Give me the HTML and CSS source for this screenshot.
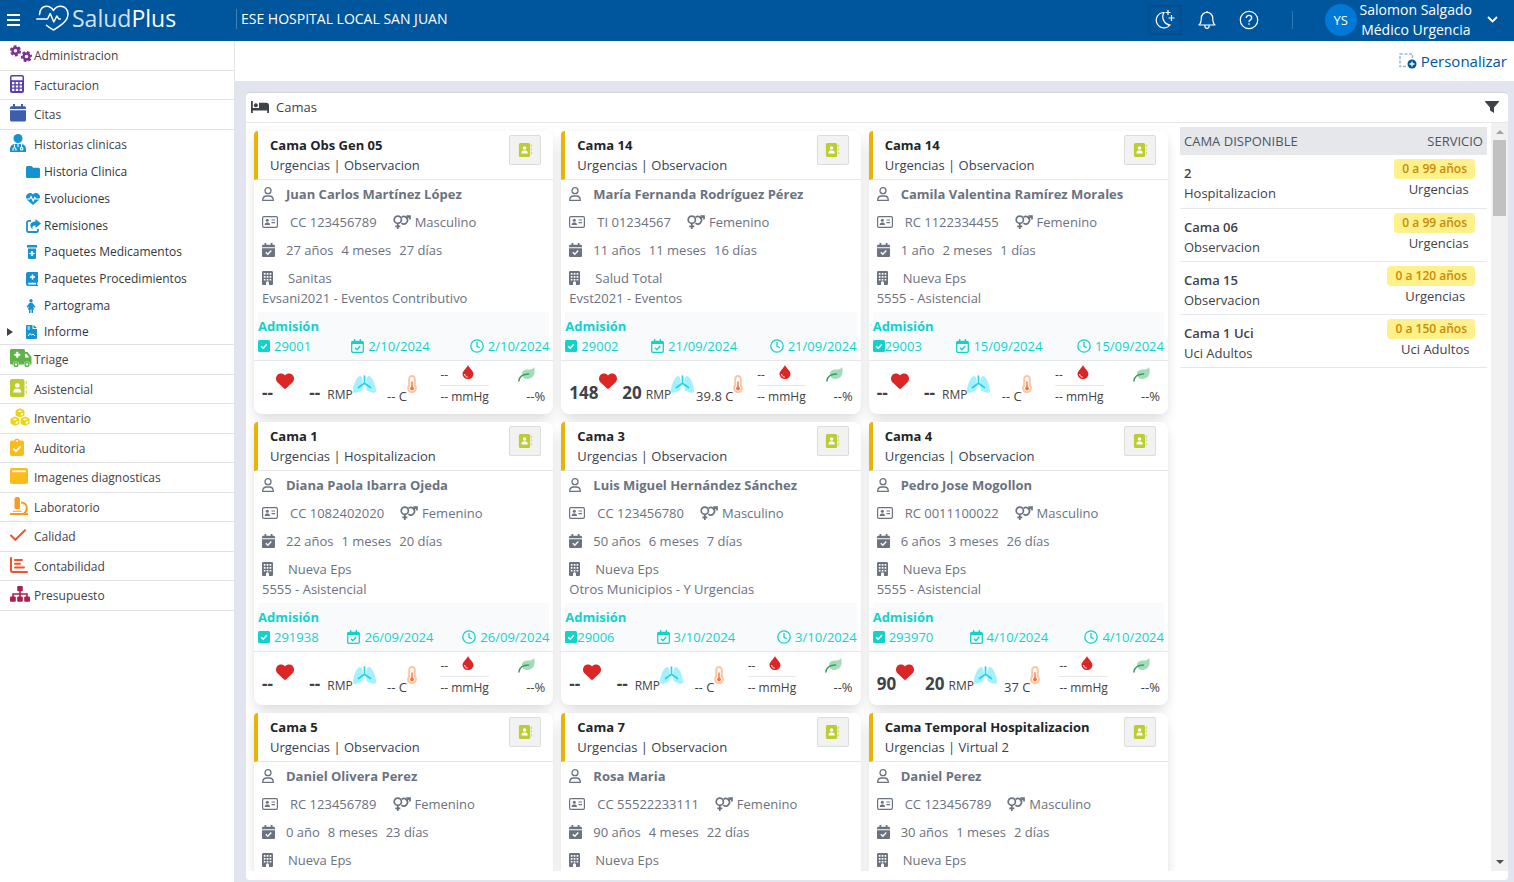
FILE: index.html
```html
<!DOCTYPE html>
<html lang="es">
<head>
<meta charset="utf-8">
<title>SaludPlus - Camas</title>
<link rel="stylesheet" href="styles.css">
</head>
<body>
<svg class="sprite" aria-hidden="true">
  <symbol id="i-gears" viewBox="0 0 22 17"><g fill="none" stroke="currentColor"><circle cx="5.5" cy="5.8" r="3" stroke-width="2.4"/><circle cx="5.5" cy="5.8" r="4.7" stroke-width="1.8" stroke-dasharray="2.8 2.12"/><circle cx="16.5" cy="11.5" r="3" stroke-width="2.4"/><circle cx="16.5" cy="11.5" r="4.7" stroke-width="1.8" stroke-dasharray="2.8 2.12" stroke-dashoffset="2.5"/></g></symbol>
  <symbol id="i-calc" viewBox="0 0 14 18"><path fill="currentColor" fill-rule="evenodd" d="M2 0h10a2 2 0 0 1 2 2v14a2 2 0 0 1-2 2H2a2 2 0 0 1-2-2V2a2 2 0 0 1 2-2zm.5 1.6c-.6 0-1 .4-1 1v2.600h11V2.600c0-.6-.4-1-1-1zM2 7v2.200h2.400V7zm3.800 0v2.200h2.400V7zm3.800 0v2.200H12V7zM2 10.400v2.200h2.400v-2.200zm3.800 0v2.200h2.400v-2.200zm3.800 0v2.200H12v-2.200zM2 13.800V16h2.400v-2.200zm3.800 0V16h2.400v-2.200zm3.800 0V16H12v-2.200z"/></symbol>
  <symbol id="i-cal" viewBox="0 0 16 18"><path fill="currentColor" d="M3 0h2v2.200h6V0h2v2.200h1.500A1.500 1.500 0 0 1 16 3.700V5H0V3.700a1.500 1.500 0 0 1 1.500-1.500H3zM0 6.300h16V16a1.500 1.500 0 0 1-1.500 1.500h-13A1.500 1.500 0 0 1 0 16z"/></symbol>
  <symbol id="i-doctor" viewBox="0 0 16 18"><circle cx="8" cy="4.500" r="4.500" fill="currentColor"/><path fill="currentColor" d="M0 18v-3c0-3 2-4.700 4.500-5h7c2.500.3 4.500 2 4.500 5v3z"/><path fill="none" stroke="#fff" stroke-width="1.100" d="M8 10v3M4.500 10.500V13M3 16.800v-1.500a1.500 1.500 0 0 1 3 0v1.500M11.500 10v3"/><circle cx="11.600" cy="14.700" r="1.300" fill="none" stroke="#fff" stroke-width="1.100"/></symbol>
  <symbol id="i-folder" viewBox="0 0 14 12"><path fill="currentColor" d="M1.500 0h4l1.800 1.700h5.200A1.500 1.500 0 0 1 14 3.200v7.300a1.500 1.500 0 0 1-1.500 1.500h-11A1.500 1.500 0 0 1 0 10.500v-9A1.500 1.500 0 0 1 1.500 0z"/></symbol>
  <symbol id="i-pulse" viewBox="0 0 14 12"><path fill="currentColor" d="M7 1.600C8.500-.3 11-.3 12.500 1c2 1.700 1.900 4 .3 5.900L7 12 1.200 6.900C-.4 5-.5 2.700 1.500 1 3-.3 5.500-.3 7 1.600z"/><path fill="none" stroke="#fff" stroke-width="1.200" d="M0 6h3.700l1.300-2.500L7.200 8l1.600-3.500.8 1.500H14"/></symbol>
  <symbol id="i-share" viewBox="0 0 15 14"><path fill="none" stroke="currentColor" stroke-width="1.800" d="M5 1.900H2.500A1.500 1.500 0 0 0 1 3.400v8A1.500 1.500 0 0 0 2.500 13h8a1.500 1.500 0 0 0 1.500-1.600V10"/><path fill="currentColor" d="M9.500 0 15 4.500 9.500 9V6.500C6.500 6.500 6 8 6.800 10.500 3 8 3.500 2.600 9.500 2.600z"/></symbol>
  <symbol id="i-bottle" viewBox="0 0 12 14"><path fill="currentColor" d="M1 0h10v2.500H1zM2 3.500h8V13a1 1 0 0 1-1 1H3a1 1 0 0 1-1-1z"/><path stroke="#fff" stroke-width="1.600" d="M6 6v5M3.500 8.500h5"/></symbol>
  <symbol id="i-book" viewBox="0 0 12 14"><path fill="currentColor" fill-rule="evenodd" d="M2 0h10v10.500h-.7V13h.7v1H2a2 2 0 0 1-2-2V2a2 2 0 0 1 2-2zm.6 10.800a1 1 0 0 0 0 1.800H10v-1.800z"/><path stroke="#fff" stroke-width="1.500" d="M6.500 2.500v5M4 5h5"/></symbol>
  <symbol id="i-woman" viewBox="0 0 10 14"><circle cx="5" cy="1.700" r="1.700" fill="currentColor"/><path fill="currentColor" d="M3.700 3.800h2.600l3.200 4-1.100.9L7 7.200l1.200 3.300H7V14H5.500v-3.400h-1V14H3v-3.500H1.800L3 7.200 1.600 8.700.5 7.800z"/></symbol>
  <symbol id="i-report" viewBox="0 0 11 14"><path fill="currentColor" d="M1 0h5.500v4H11v9a1 1 0 0 1-1 1H1a1 1 0 0 1-1-1V1a1 1 0 0 1 1-1zM7.500 0 11 3H7.500z"/><path fill="none" stroke="#fff" d="M1.500 2H4M1.500 4H4M2 11l2-2.500L5.500 10 7 9l2 2"/></symbol>
  <symbol id="i-ambulance" viewBox="0 0 22 18"><path fill="currentColor" fill-rule="evenodd" d="M1.500 0h12A1.500 1.500 0 0 1 15 1.500V3h2.500L21.500 8v7.500H20a3 3 0 0 0-6 0H9a3 3 0 0 0-6 0H1.500A1.500 1.500 0 0 1 0 14V1.500A1.500 1.500 0 0 1 1.500 0zM15 5v3.500h4.200L16.700 5z"/><circle cx="6" cy="15.400" r="1.900" fill="none" stroke="currentColor" stroke-width="1.400"/><circle cx="17" cy="15.400" r="1.900" fill="none" stroke="currentColor" stroke-width="1.400"/><path stroke="#fff" stroke-width="2" d="M7.300 2.800v6M4.300 5.800h6"/></symbol>
  <symbol id="i-contact" viewBox="0 0 17 18"><rect width="14.500" height="18" rx="2" fill="currentColor"/><path stroke="currentColor" stroke-width="1.400" stroke-dasharray="3 1.800" d="M16.300 2v14" opacity=".6"/><circle cx="7.300" cy="6.500" r="2.300" fill="#fff"/><path fill="#fff" d="M3.300 13.500c0-2.500 1-3.700 2.700-3.700h2.600c1.700 0 2.700 1.200 2.700 3.700z"/></symbol>
  <symbol id="i-cubes" viewBox="0 0 20 18"><path fill="currentColor" stroke="currentColor" stroke-linejoin="round" d="M10 .8 14 2.600v4.600L10 9 6 7.200V2.600zM5 9l4 1.800v4.600L5 17.300 1 15.400v-4.600zM15 9l4 1.800v4.600l-4 1.900-4-1.900v-4.600z"/><path fill="#fff" d="m10 2.200 2.300 1L10 4.200l-2.300-1zM10.800 5.800 13 4.900v1.900l-2.200 1zM5 10.400l2.300 1-2.300 1-2.300-1zM5.800 14l2.200-.9V15l-2.200 1zM15 10.400l2.300 1-2.300 1-2.300-1zM15.800 14l2.200-.9V15l-2.200 1z"/></symbol>
  <symbol id="i-clip" viewBox="0 0 14 18"><path fill="currentColor" d="M2 2.500h2.300a2.800 2.800 0 0 1 5.400 0H12a2 2 0 0 1 2 2V16a2 2 0 0 1-2 2H2a2 2 0 0 1-2-2V4.500a2 2 0 0 1 2-2z"/><circle cx="7" cy="3" r="1" fill="#fff"/><path fill="none" stroke="#fff" stroke-width="1.800" d="m3.300 10.700 2.700 2.600 4.700-5"/></symbol>
  <symbol id="i-window" viewBox="0 0 18 16"><rect width="18" height="16" rx="2" fill="currentColor"/><path stroke="#fff" stroke-width="1.800" d="M2.200 3.300h13.600"/></symbol>
  <symbol id="i-micro" viewBox="0 0 18 18"><path fill="currentColor" d="M4.500 2.500A1.200 1.200 0 0 1 5.500 1V0h3.500v1a1.200 1.200 0 0 1 1 1.500V11a1 1 0 0 1-1 1H5.500a1 1 0 0 1-1-1zM3 13.700h8.500v1H3zM0 16h18v2H0z"/><path fill="none" stroke="currentColor" stroke-width="2" d="M11 5.500c3.500 0 5.800 2.300 5.800 5.500 0 2.800-1.500 4.700-3.300 6"/></symbol>
  <symbol id="i-check" viewBox="0 0 16 12"><path fill="none" stroke="currentColor" stroke-width="2" stroke-linecap="round" d="m1 6.500 4.300 4.300L15 1.200"/></symbol>
  <symbol id="i-chart" viewBox="0 0 18 16"><path fill="none" stroke="currentColor" stroke-width="2" stroke-linecap="round" d="M1 1v12.500A1.500 1.500 0 0 0 2.500 15H17M5 3h7M5 6.800h5M5 10.600h9"/></symbol>
  <symbol id="i-tree" viewBox="0 0 20 16"><path fill="none" stroke="currentColor" stroke-width="1.600" d="M10 4v7M3 11V8h14v3"/><g fill="currentColor"><rect x="7.200" width="5.600" height="5.300" rx="1"/><rect y="10.500" width="5.800" height="5.300" rx="1"/><rect x="7.200" y="10.500" width="5.600" height="5.300" rx="1"/><rect x="14.200" y="10.500" width="5.800" height="5.300" rx="1"/></g></symbol>
  <symbol id="i-bed" viewBox="0 0 18 12"><path fill="currentColor" d="M0 0h1.800v7H8V1.800h7A3 3 0 0 1 18 5v7h-1.800V9.500H1.800V12H0z"/><circle cx="4.900" cy="4.300" r="2" fill="currentColor"/></symbol>
  <symbol id="i-filter" viewBox="0 0 14 12"><path fill="currentColor" d="M.5 0h13c.5 0 .7.600.3 1L9 6.500V12L5 9.500v-3L.2 1C-.1.600 0 0 .5 0z"/></symbol>
  <symbol id="i-user" viewBox="0 0 12 14"><g fill="none" stroke="currentColor" stroke-width="1.300"><circle cx="6" cy="3.700" r="3"/><path d="M.7 13.300c0-2.800 1.800-4.300 4-4.300h2.600c2.200 0 4 1.500 4 4.300z"/></g></symbol>
  <symbol id="i-id" viewBox="0 0 16 12"><rect x=".6" y=".6" width="14.800" height="10.800" rx="1.300" fill="none" stroke="currentColor" stroke-width="1.200"/><circle cx="5.300" cy="4.200" r="1.500" fill="currentColor"/><path fill="currentColor" d="M2.700 9c0-1.800.8-2.600 2-2.600H6c1.200 0 2 .8 2 2.600zM9.500 3.400H13v1.200H9.500zM9.500 6H13v1.200H9.500z"/></symbol>
  <symbol id="i-sex" viewBox="0 0 18 14"><g fill="none" stroke="currentColor" stroke-width="1.700"><circle cx="4.800" cy="4.700" r="3.600"/><path d="M4.800 8.300V14M2.300 11.400h5M8.600 2.200a3.700 3.700 0 1 1-.2 5.900M13.300 4 16.500 1M13.300 1H17v3.500"/></g></symbol>
  <symbol id="i-calcheck" viewBox="0 0 13 14"><path fill="currentColor" d="M2.500 0h1.800v1.700h4.400V0h1.800v1.700h1.200c.7 0 1.300.6 1.300 1.300v1.300H0V3c0-.7.600-1.300 1.300-1.300h1.200zM0 5.200h13v7.500c0 .7-.6 1.300-1.300 1.300H1.300C.6 14 0 13.400 0 12.700z"/><path fill="none" stroke="#fff" stroke-width="1.400" d="m3.800 9.300 2 2L9.300 7.600"/></symbol>
  <symbol id="i-building" viewBox="0 0 11 14"><path fill="currentColor" fill-rule="evenodd" d="M1.300 0h8.400C10.400 0 11 .6 11 1.300v11.400c0 .7-.6 1.300-1.300 1.300H7v-2.300a1.500 1.500 0 0 0-3 0V14H1.300C.6 14 0 13.400 0 12.700V1.300C0 .6.600 0 1.300 0zM1.800 2v1.800h1.700V2zm2.900 0v1.800h1.700V2zm2.900 0v1.800h1.700V2zM1.800 5v1.800h1.700V5zm2.900 0v1.800h1.700V5zm2.900 0v1.800h1.700V5zM1.800 8v1.500h1.700V8zm2.900 0v1.500h1.700V8zm2.900 0v1.500h1.700V8z"/></symbol>
  <symbol id="i-tick" viewBox="0 0 12 12"><rect width="12" height="12" rx="1.500" fill="currentColor"/><path fill="none" stroke="#fff" stroke-width="1.500" d="m3.200 6.200 2 2 3.600-4"/></symbol>
  <symbol id="i-calline" viewBox="0 0 13 14"><path fill="none" stroke="currentColor" stroke-width="1.300" d="M2 2.300h9c.8 0 1.300.5 1.300 1.300V12c0 .8-.5 1.300-1.300 1.300H2c-.8 0-1.300-.5-1.300-1.300V3.600c0-.8.500-1.300 1.300-1.300zM3.700 0v3M9.300 0v3M4 8.800l1.900 1.900L9.200 7"/><path fill="currentColor" d="M1 2.500h11V5H1z"/></symbol>
  <symbol id="i-clock" viewBox="0 0 14 14"><g fill="none" stroke="currentColor" stroke-width="1.300"><circle cx="7" cy="7" r="6.200"/><path d="M7 3v4.300l2.800 1.500"/></g></symbol>
  <symbol id="i-heart" viewBox="0 32 512 448"><path fill="#dc2626" d="M47.600 300.400L228.300 469.100c7.500 7 17.400 10.900 27.700 10.900s20.200-3.900 27.700-10.900L464.400 300.400c30.400-28.300 47.600-68 47.600-109.500v-5.800c0-69.900-50.500-129.500-119.400-141C347 36.500 300.600 51.400 268 84L256 96 244 84c-32.600-32.600-79-47.500-124.600-39.900C50.500 55.600 0 115.200 0 185.100v5.800c0 41.500 17.200 81.200 47.600 109.500z"/></symbol>
  <symbol id="i-lungs" viewBox="0 0 23 18"><path fill="#a5f0fb" d="M9.700 6.500C9.700 3 8.500 1 7 1 4 1 0 10 0 15.500c0 2 1.300 2.700 3.200 2.200l3.700-1.200c2-.7 2.800-1.600 2.800-3.300zM13.300 6.500C13.300 3 14.500 1 16 1c3 0 7 9 7 14.500 0 2-1.300 2.700-3.200 2.200l-3.700-1.200c-2-.7-2.800-1.600-2.800-3.300z"/><path fill="none" stroke="#22d3ee" stroke-width="1.700" stroke-linecap="round" d="M11.500 1v7.300L5.500 12.500M11.500 8.300l6 4.200"/></symbol>
  <symbol id="i-thermo" viewBox="0 0 10 18"><path fill="#fff" stroke="#fdc5a0" stroke-width="2" d="M5 1c-1.700 0-2.800 1.200-2.800 3v6.500a3.900 3.900 0 1 0 5.600 0V4C7.800 2.200 6.700 1 5 1z"/><path stroke="#f9703e" stroke-width="1.400" d="M5 6.500V13"/><circle cx="5" cy="13.500" r="1.900" fill="#f9703e"/></symbol>
  <symbol id="i-drop" viewBox="0 0 12 14"><path fill="#dc2626" d="M6 0c1.300 3 5.500 6 5.500 9A5.300 5.300 0 0 1 6 14 5.300 5.300 0 0 1 .5 9C.5 6 4.700 3 6 0z"/><path fill="none" stroke="#fff" d="M2.700 9c0 1.800 1.200 3 3 3.100"/></symbol>
  <symbol id="i-leaf" viewBox="0 0 17 15"><path fill="#a3dcb8" d="M16 0c2 6-.5 12-6.500 12-3 0-5.500-2-5.500-5 0-3.500 3-4.500 6-4.500S15 2 16 0z"/><path fill="none" stroke="#3a9e5f" stroke-width="1.500" stroke-linecap="round" d="M.9 14C1.500 9.500 4.500 7 10.500 7"/></symbol>
</svg>

<header class="topbar">
  <button class="menu-toggle" type="button" aria-label="Menú"><span></span><span></span><span></span></button>
  <div class="brand">
    <svg width="33" height="26" viewBox="0 0 33 26" aria-hidden="true"><g fill="none" stroke="#fff" stroke-width="1.500" stroke-linecap="round" stroke-linejoin="round"><path d="M3.500 9.500C4 4 6.500 1.200 10.500 1.200c3 0 5.300 1.500 7 4.300 1.500-2.800 4-4.300 7-4.300 4.500 0 7.500 3.300 7.500 7.800 0 6.500-6 11-14.500 16-3-1.700-5.200-3.200-7-4.800"/><path d="M.8 14h10.700l2.700-5.500 3.600 8.500 3-6 2 3h1.500"/></g></svg>
    <span class="brand-name">Salud<b>Plus</b></span>
  </div>
  <div class="hospital">ESE HOSPITAL LOCAL SAN JUAN</div>
  <div class="top-actions">
    <button class="icon-btn framed" type="button" aria-label="Modo oscuro"><svg width="20" height="20" viewBox="0 0 20 20"><g fill="none" stroke="#fff" stroke-width="1.200"><path d="M9 2.500a7.700 7.700 0 1 0 6 12.500A8.300 8.300 0 0 1 9 2.500zM13 0v5M10.500 2.500h5M16.500 5v6M13.500 8h6"/></g></svg></button>
    <button class="icon-btn" type="button" aria-label="Notificaciones"><svg width="18" height="20" viewBox="0 0 18 20"><path fill="none" stroke="#fff" stroke-width="1.200" stroke-linejoin="round" d="M1 15c1.800-1.500 2.300-3 2.300-7a5.700 5.700 0 0 1 11.400 0c0 4 .5 5.500 2.300 7zM6.800 15.500c0 3.800 4.400 3.800 4.400 0M9 1v1.500"/></svg></button>
    <button class="icon-btn" type="button" aria-label="Ayuda"><svg width="20" height="20" viewBox="0 0 20 20"><circle cx="10" cy="10" r="8.700" fill="none" stroke="#fff" stroke-width="1.200"/><path fill="none" stroke="#fff" stroke-width="1.300" d="M7.300 8c0-3.500 5.400-3.500 5.400 0 0 1.800-2.700 2-2.700 4M10 13.200v1.500"/></svg></button>
  </div>
  <button class="account" type="button">
    <span class="avatar">YS</span>
    <span class="account-text">Salomon Salgado<br>Médico Urgencia</span>
    <svg width="11" height="7" viewBox="0 0 11 7" aria-hidden="true"><path fill="none" stroke="#fff" stroke-width="1.800" d="m1 1 4.500 4.500L10 1"/></svg>
  </button>
</header>

<div class="shell">
  <nav class="sidebar">
    <ul class="menu">
      <li><a href="#" class="c-purple"><svg width="22" height="17"><use href="#i-gears"/></svg><span>Administracion</span></a></li>
      <li><a href="#" class="c-violet"><svg width="14" height="18"><use href="#i-calc"/></svg><span>Facturacion</span></a></li>
      <li><a href="#" class="c-indigo"><svg width="16" height="18"><use href="#i-cal"/></svg><span>Citas</span></a></li>
      <li class="open"><a href="#" class="c-blue"><svg width="16" height="18"><use href="#i-doctor"/></svg><span>Historias clinicas</span></a>
        <ul class="submenu">
          <li><a href="#"><i></i><svg width="14" height="12"><use href="#i-folder"/></svg><span>Historia Clinica</span></a></li>
          <li><a href="#"><i></i><svg width="14" height="12"><use href="#i-pulse"/></svg><span>Evoluciones</span></a></li>
          <li><a href="#"><i></i><svg width="15" height="14"><use href="#i-share"/></svg><span>Remisiones</span></a></li>
          <li><a href="#"><i></i><svg width="12" height="14"><use href="#i-bottle"/></svg><span>Paquetes Medicamentos</span></a></li>
          <li><a href="#"><i></i><svg width="12" height="14"><use href="#i-book"/></svg><span>Paquetes Procedimientos</span></a></li>
          <li><a href="#"><i></i><svg width="10" height="14"><use href="#i-woman"/></svg><span>Partograma</span></a></li>
          <li><a href="#"><i class="caret"></i><svg width="11" height="14"><use href="#i-report"/></svg><span>Informe</span></a></li>
        </ul>
      </li>
      <li><a href="#" class="c-green"><svg width="22" height="18"><use href="#i-ambulance"/></svg><span>Triage</span></a></li>
      <li><a href="#" class="c-lime"><svg width="17" height="18"><use href="#i-contact"/></svg><span>Asistencial</span></a></li>
      <li><a href="#" class="c-yellow"><svg width="20" height="18"><use href="#i-cubes"/></svg><span>Inventario</span></a></li>
      <li><a href="#" class="c-amber"><svg width="14" height="18"><use href="#i-clip"/></svg><span>Auditoria</span></a></li>
      <li><a href="#" class="c-amber"><svg width="18" height="16"><use href="#i-window"/></svg><span>Imagenes diagnosticas</span></a></li>
      <li><a href="#" class="c-orange"><svg width="18" height="18"><use href="#i-micro"/></svg><span>Laboratorio</span></a></li>
      <li><a href="#" class="c-red"><svg width="16" height="12"><use href="#i-check"/></svg><span>Calidad</span></a></li>
      <li><a href="#" class="c-red"><svg width="18" height="16"><use href="#i-chart"/></svg><span>Contabilidad</span></a></li>
      <li><a href="#" class="c-wine"><svg width="20" height="16"><use href="#i-tree"/></svg><span>Presupuesto</span></a></li>
    </ul>
  </nav>

  <main class="content">
    <div class="toolbar">
      <button class="customize" type="button"><svg width="18" height="16" viewBox="0 0 18 16" aria-hidden="true"><rect x="1" y="1" width="12.500" height="12.500" fill="none" stroke="#9dbbd8" stroke-width="1.500" stroke-dasharray="3 1.500"/><circle cx="13" cy="11" r="5.500" fill="#fff"/><circle cx="13" cy="11" r="4.500" fill="#00569d"/><path stroke="#fff" stroke-width="1.300" d="M13 8.500v5M10.500 11h5"/></svg>Personalizar</button>
    </div>
    <div class="workspace">
      <section class="panel">
        <div class="panel-head">
          <svg width="18" height="12"><use href="#i-bed"/></svg><h1>Camas</h1>
          <button class="filter" type="button" aria-label="Filtrar"><svg width="14" height="12"><use href="#i-filter"/></svg></button>
        </div>
        <div class="panel-body">
          <div class="cards" id="cards"></div>
          <div class="available">
            <table>
              <thead><tr><th>CAMA DISPONIBLE</th><th>SERVICIO</th></tr></thead>
              <tbody>
                <tr><td><strong>2</strong>Hospitalizacion</td><td><div class="service"><span class="badge">0 a 99 años</span>Urgencias</div></td></tr>
                <tr><td><strong>Cama 06</strong>Observacion</td><td><div class="service"><span class="badge">0 a 99 años</span>Urgencias</div></td></tr>
                <tr><td><strong>Cama 15</strong>Observacion</td><td><div class="service"><span class="badge">0 a 120 años</span>Urgencias</div></td></tr>
                <tr><td><strong>Cama 1 Uci</strong>Uci Adultos</td><td><div class="service"><span class="badge">0 a 150 años</span>Uci Adultos</div></td></tr>
              </tbody>
            </table>
          </div>
          <div class="scrollbar" aria-hidden="true"><span class="arrow up"></span><span class="thumb"></span><span class="arrow down"></span></div>
        </div>
      </section>
    </div>
  </main>
</div>
<script src="app.js"></script>
</body>
</html>
```

FILE: app.js
```js
const beds = [
  { bed: "Cama Obs Gen 05", area: "Urgencias | Observacion", name: "Juan Carlos Martínez López", id: "CC 123456789", sex: "Masculino", age: ["27 años", "4 meses", "27 días"], eps: "Sanitas", plan: "Evsani2021 - Eventos Contributivo", adm: "29001", date: "2/10/2024" },
  { bed: "Cama 14", area: "Urgencias | Observacion", name: "María Fernanda Rodríguez Pérez", id: "TI 01234567", sex: "Femenino", age: ["11 años", "11 meses", "16 días"], eps: "Salud Total", plan: "Evst2021 - Eventos", adm: "29002", date: "21/09/2024", pulse: "148", breath: "20", temp: "39.8" },
  { bed: "Cama 14", area: "Urgencias | Observacion", name: "Camila Valentina Ramírez Morales", id: "RC 1122334455", sex: "Femenino", age: ["1 año", "2 meses", "1 días"], eps: "Nueva Eps", plan: "5555 - Asistencial", adm: "29003", tight: true, date: "15/09/2024" },
  { bed: "Cama 1", area: "Urgencias | Hospitalizacion", name: "Diana Paola Ibarra Ojeda", id: "CC 1082402020", sex: "Femenino", age: ["22 años", "1 meses", "20 días"], eps: "Nueva Eps", plan: "5555 - Asistencial", adm: "291938", date: "26/09/2024" },
  { bed: "Cama 3", area: "Urgencias | Observacion", name: "Luis Miguel Hernández Sánchez", id: "CC 123456780", sex: "Masculino", age: ["50 años", "6 meses", "7 días"], eps: "Nueva Eps", plan: "Otros Municipios - Y Urgencias", adm: "29006", tight: true, date: "3/10/2024" },
  { bed: "Cama 4", area: "Urgencias | Observacion", name: "Pedro Jose Mogollon", id: "RC 0011100022", sex: "Masculino", age: ["6 años", "3 meses", "26 días"], eps: "Nueva Eps", plan: "5555 - Asistencial", adm: "293970", date: "4/10/2024", pulse: "90", breath: "20", temp: "37" },
  { bed: "Cama 5", area: "Urgencias | Observacion", name: "Daniel Olivera Perez", id: "RC 123456789", sex: "Femenino", age: ["0 año", "8 meses", "23 días"], eps: "Nueva Eps" },
  { bed: "Cama 7", area: "Urgencias | Observacion", name: "Rosa Maria", id: "CC 55522233111", sex: "Femenino", age: ["90 años", "4 meses", "22 días"], eps: "Nueva Eps" },
  { bed: "Cama Temporal Hospitalizacion", area: "Urgencias | Virtual 2", name: "Daniel Perez", id: "CC 123456789", sex: "Masculino", age: ["30 años", "1 meses", "2 días"], eps: "Nueva Eps" }
];

const icon = (name, w, h) => `<svg width="${w}" height="${h}" aria-hidden="true"><use href="#i-${name}"/></svg>`;

const admission = b => `
  <div class="admission">
    <h3>Admisión</h3>
    <div class="adm-row">
      <span class="${b.tight ? "tight" : ""}">${icon("tick", 12, 12)}${b.adm}</span>
      <span>${icon("calline", 13, 14)}${b.date}</span>
      <span>${icon("clock", 14, 14)}${b.date}</span>
    </div>
  </div>
  <div class="vitals">
    <div class="vital pulse"><b>${b.pulse || "--"}</b>${icon("heart", 18, 16)}</div>
    <div class="vital breath"><b>${b.breath || "--"}</b><span>RMP</span>${icon("lungs", 23, 18)}</div>
    <div class="vital temp"><span>${b.temp || "--"} C</span>${icon("thermo", 10, 18)}</div>
    <div class="pressure"><div><span>--</span>${icon("drop", 12, 14)}</div><div>-- mmHg</div></div>
    <div class="oxygen">${icon("leaf", 17, 15)}<span>--%</span></div>
  </div>`;

const card = b => `
<article class="card">
  <header class="card-head">
    <div><h2>${b.bed}</h2><p>${b.area}</p></div>
    <button class="card-btn" type="button" aria-label="Ver paciente">${icon("contact", 15, 14)}</button>
  </header>
  <div class="card-body">
    <div class="line name"><span class="ico">${icon("user", 12, 14)}</span>${b.name}</div>
    <div class="line"><span class="ico wide">${icon("id", 16, 12)}</span>${b.id}<span class="sex">${icon("sex", 18, 14)}${b.sex}</span></div>
    <div class="line age"><span class="ico">${icon("calcheck", 13, 14)}</span>${b.age.map(a => `<span>${a}</span>`).join("")}</div>
    <div class="eps"><div><span class="ico">${icon("building", 11, 14)}</span>${b.eps}</div>${b.plan ? `<p>${b.plan}</p>` : ""}</div>
  </div>${b.adm ? admission(b) : ""}
</article>`;

document.getElementById("cards").innerHTML = beds.map(card).join("");
```

FILE: styles.css
```css
* { box-sizing: border-box; }
body {
  margin: 0;
  height: 100vh;
  display: flex;
  flex-direction: column;
  overflow: hidden;
  font: 13px/20px "Open Sans", "Noto Sans", sans-serif;
  color: #3f4247;
  background: #fff;
}
h1, h2, h3, p, ul { margin: 0; padding: 0; }
h1, h2, h3 { font-size: 13px; }
ul { list-style: none; }
button { font: inherit; color: inherit; background: none; border: 0; padding: 0; cursor: pointer; }
svg { flex: none; display: block; }
.sprite { position: absolute; width: 0; height: 0; }

/* Top bar */
.topbar { display: flex; align-items: center; height: 41px; flex: none; padding: 0 16px 2px 7px; background: #00569d; color: #fff; }
.menu-toggle { display: grid; gap: 3px; width: 13px; }
.menu-toggle span { height: 2px; background: #fff; }
.brand { display: flex; align-items: center; gap: 3px; width: 200px; margin-left: 16px; padding-bottom: 4px; }
.brand-name { font: 23px/26px "Open Sans", sans-serif; color: #d3e1ee; }
.brand-name b { font-weight: 500; color: #fff; }
.hospital { border-left: 1px solid #4080b4; padding-left: 4px; margin-bottom: 2px; font-size: 14px; }
.top-actions { display: flex; align-items: center; gap: 8px; margin-left: auto; padding-right: 26px; border-right: 1px solid #3377af; height: 18px; }
.icon-btn { display: grid; place-items: center; width: 34px; height: 30px; }
.icon-btn.framed { border: 2px solid #064d8b; border-radius: 2px; }
.account { display: flex; align-items: center; gap: 3px; margin-left: 32px; font-size: 14px; text-align: center; }
.account svg { margin-left: 12px; }
.avatar { width: 32px; height: 32px; border-radius: 50%; background: #0078d7; font-size: 13px; line-height: 32px; }

/* Sidebar */
.shell { display: flex; flex: 1; min-height: 0; }
.sidebar { width: 235px; flex: none; border-right: 1px solid #e2e3e6; font-size: 12px; }
.menu > li { border-bottom: 1px solid #dfe1e3; height: 30px; }
.menu > li:nth-child(even) { height: 29px; }
.menu > li.open { height: auto; }
.menu a { display: flex; align-items: center; height: 29px; color: inherit; text-decoration: none; padding-left: 10px; }
.menu > li > a > svg { margin-bottom: 4px; }
.menu > li > a > span { color: #3f4247; margin-left: auto; width: 200px; }
.menu .open > a { height: 28px; padding-top: 2px; }
.menu .submenu li { height: 27px; }
.menu .submenu li:nth-child(3n), .menu .submenu li:last-child { height: 26px; }
.menu .submenu a { height: 27px; padding-left: 7px; color: #1593d0; }
.submenu i { width: 19px; }
.submenu .caret::before { content: ""; display: block; width: 0; border-left: 6px solid #3f4247; border-top: 4px solid transparent; border-bottom: 4px solid transparent; }
.submenu span { color: #33373c; margin-left: auto; width: 190px; }
.menu .c-purple { color: #7c2e94; }
.menu .c-violet { color: #5b3bb0; }
.menu .c-indigo { color: #3e5dad; }
.menu .c-blue { color: #1593d0; }
.menu .c-green { color: #5fb346; }
.menu .c-lime { color: #bdcc32; }
.menu .c-yellow { color: #ead51c; }
.menu .c-amber { color: #fbbb1b; }
.menu .c-orange { color: #f99a20; }
.menu .c-red { color: #f1532b; }
.menu .c-wine { color: #ab1f4b; }

/* Content */
.content { flex: 1; min-width: 0; display: flex; flex-direction: column; }
.toolbar { height: 40px; flex: none; display: flex; justify-content: flex-end; align-items: center; padding-right: 7px; }
.customize { display: flex; align-items: center; gap: 4px; font-size: 15px; color: #00569d; }
.workspace { flex: 1; min-height: 0; display: flex; background: #e2e5ee; padding: 11px 6px 2px 11px; }
.panel { flex: 1; min-width: 0; display: flex; flex-direction: column; background: #fff; border-radius: 4px; border-top: 1px solid #d2d3d8; padding-bottom: 9px; }
.panel-head { display: flex; align-items: center; height: 30px; flex: none; padding: 0 9px 2px 5px; border-bottom: 1px solid #e5e7eb; }
.panel-head h1 { font-weight: 400; margin-left: 7px; }
.filter { margin-left: auto; }
.panel-body { flex: 1; min-height: 0; overflow: hidden; display: grid; grid-template-columns: minmax(0, 1fr) 315px 17px; grid-template-rows: 100%; }

/* Bed cards */
.cards { overflow: hidden; display: grid; grid-template-columns: repeat(3, minmax(0, 1fr)); align-content: start; gap: 8px; padding: 8px; }
.card { min-height: 283px; background: #fff; border-radius: 8px; box-shadow: 0 8px 14px -2px rgba(0, 0, 0, .12), 0 0 8px rgba(0, 0, 0, .04); color: #6b7280; }
.card-head { display: flex; justify-content: space-between; align-items: flex-start; padding: 4px 12px; border-left: 4px solid #eab308; border-bottom: 1px solid #e5e7eb; border-radius: 4px 8px 0 0; color: #374151; }
.card-head h2 { color: #212529; }
.card-btn { display: grid; place-items: center; width: 32px; height: 30px; background: #f2f2f2; border: 1px solid #dcdcdc; border-radius: 2px; color: #bdcc32; }
.card-body { padding: 0 8px; }
.line { display: flex; align-items: center; height: 28px; }
.ico { width: 24px; flex: none; }
.ico.wide { width: 28px; }
.name { font-weight: 700; }
.age { gap: 8px; }
.age .ico { margin-right: -8px; }
.sex { display: flex; align-items: center; gap: 4px; margin-left: 16px; }
.eps { padding: 4px 0; }
.eps div { display: flex; align-items: center; }
.eps .ico { width: 26px; }
.admission { margin: 0 4px; padding: 4px 0; background: #f8fafc; color: #12d2cc; }
.adm-row { display: flex; justify-content: space-between; }
.adm-row span { display: flex; align-items: center; gap: 4px; }
.adm-row .tight { gap: 0; }
.vitals { display: flex; justify-content: space-between; height: 54px; border-top: 1px solid #e5e7eb; padding: 4px 8px 0; color: #3f4247; font-size: 12px; }
.vital { display: flex; align-items: flex-start; padding-top: 10px; }
.vital b { min-width: 14px; font-size: 17px; line-height: 36px; height: 30px; }
.vital span { line-height: 42px; height: 30px; }
.pulse { padding-top: 8px; margin-right: 4px; }
.pulse b { line-height: 40px; }
.breath span { margin-left: 4px; line-height: 40px; }
.temp { margin-right: 12px; font-size: 13px; }
.pressure div { display: flex; }
.pressure div:first-child { gap: 14px; border-bottom: 1px solid #e5e7eb; margin-bottom: 1px; }
.oxygen { margin-left: 18px; padding-top: 2px; font-size: 13px; }
.oxygen span { display: block; padding-left: 8px; line-height: 28px; }

/* Available beds */
.available { padding: 4px; }
table { width: 100%; border-collapse: collapse; }
th { height: 28px; padding: 0 4px; background: #e5e7eb; color: #4b5563; font-weight: 400; text-align: left; }
th:last-child { text-align: right; }
td { height: 53px; padding: 4px; vertical-align: top; border-bottom: 1px solid #e5e7eb; }
td:first-child { padding-top: 8px; }
td:last-child { text-align: right; }
td strong { display: block; font-weight: 600; }
.service { display: inline-block; text-align: center; }
.badge { display: block; margin-right: 8px; padding: 0 8px; border-radius: 4px; background: #fef08a; color: #ca8a04; font-size: 12px; font-weight: 600; }

/* Scrollbar */
.scrollbar { background: #f1f1f1; display: flex; flex-direction: column; align-items: center; padding: 7px 0; }
.arrow { border: 4px solid transparent; border-top: 0; border-bottom: 4px solid #a3a3a3; }
.arrow.down { border-top: 4px solid #505050; border-bottom: 0; margin-top: auto; }
.thumb { width: 13px; height: 76px; margin-top: 6px; background: #c1c1c1; }
```
